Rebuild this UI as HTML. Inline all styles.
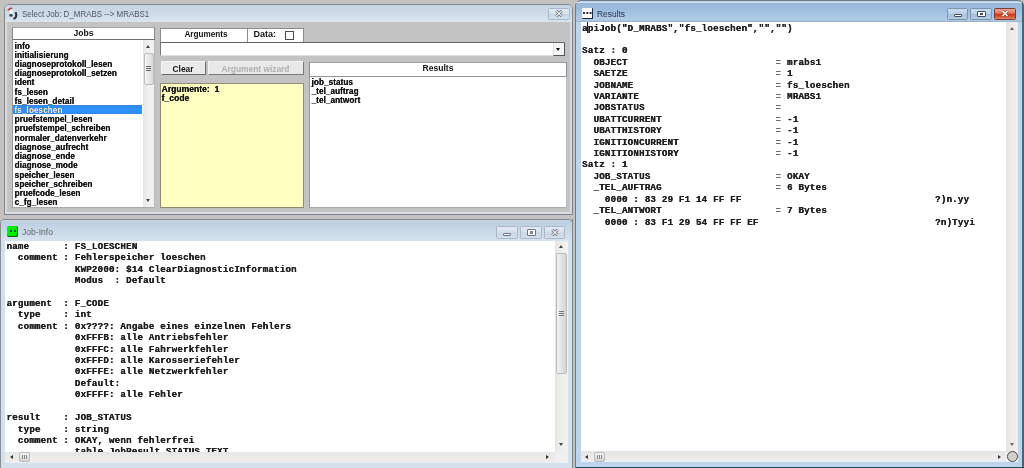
<!DOCTYPE html>
<html><head><meta charset="utf-8">
<style>
*{margin:0;padding:0;box-sizing:border-box}
html,body{width:1024px;height:468px;overflow:hidden;background:#c3c2c0;position:relative;font-family:"Liberation Sans",sans-serif}
#root{position:absolute;left:0;top:0;width:1024px;height:468px;will-change:transform}
.a{position:absolute}
.mono{font-family:"Liberation Mono",monospace;font-weight:bold;font-size:9.2px;letter-spacing:0.18px;line-height:11.4px;white-space:pre;color:#202020;text-shadow:0.3px 0 0 #202020}
.lst{font-weight:bold;font-size:8.2px;line-height:9.22px;white-space:pre;color:#141414;letter-spacing:0.05px;text-shadow:0.2px 0 0 #141414}
.hdr{background:#fff;font-weight:bold;font-size:8.6px;text-align:center;color:#141414;white-space:pre}
.eq{color:#6a6a6a;text-shadow:none}
.tb{border:1px solid #a8b8ca;border-radius:1.5px;background:linear-gradient(#e2eaf4,#d6e1ee 45%,#c8d6e6 55%,#d4e0ec)}
.tb2{border:1px solid #7c94ac;border-radius:1.5px;background:linear-gradient(#c8dbee,#bcd0e6 45%,#a8c0dc 55%,#b4cce4)}
.up{border-left:2.5px solid transparent;border-right:2.5px solid transparent;border-bottom:3px solid #444}
.dn{border-left:2.5px solid transparent;border-right:2.5px solid transparent;border-top:3px solid #444}
.lf{border-top:2.5px solid transparent;border-bottom:2.5px solid transparent;border-right:3px solid #333}
.rt{border-top:2.5px solid transparent;border-bottom:2.5px solid transparent;border-left:3px solid #333}
</style></head><body><div id="root">

<!-- ============ Window 1: Select Job ============ -->
<div class="a" style="left:4px;top:4px;width:569px;height:211px;background:#dadfe6;border:1px solid #7e858c;border-radius:5px 5px 0 0"></div>
<div class="a" style="left:5px;top:5px;width:567px;height:17px;background:linear-gradient(#c6d3e0,#d0dde9 60%,#dae5ee);border-radius:4px 4px 0 0"></div>
<svg class="a" style="left:6px;top:6px" width="14" height="14" viewBox="0 0 14 14">
<path d="M2 5 Q2.5 1.8 6.5 2" stroke="#e8c8d0" stroke-width="3.2" fill="none"/>
<path d="M2.3 4.6 Q2.8 2.3 6.3 2.4" stroke="#9a5060" stroke-width="1.8" fill="none"/>
<circle cx="5.2" cy="5.6" r="2" fill="#f6f2f4"/>
<ellipse cx="5" cy="9.4" rx="1.7" ry="1.3" fill="#34404c"/>
<path d="M9.6 6.2 Q10.8 9.2 9.8 11.2 Q9 12.6 7.4 12.3" stroke="#2a3440" stroke-width="2.2" fill="none"/>
</svg>
<div class="a" style="left:22.3px;top:8.6px;font-size:9px;line-height:11px;color:#4e5864;white-space:pre;transform:scaleX(0.885);transform-origin:0 0">Select Job: D_MRABS --&gt; MRABS1</div>
<div class="a tb" style="left:548px;top:8px;width:22px;height:12px"></div>
<svg class="a" style="left:554px;top:8.7px" width="10" height="9" viewBox="0 0 10 9"><path d="M2.3 1.8 L7.7 7.2 M7.7 1.8 L2.3 7.2" stroke="#6a7480" stroke-width="2.8"/><path d="M2.3 1.8 L7.7 7.2 M7.7 1.8 L2.3 7.2" stroke="#f4f6f8" stroke-width="1.2"/></svg>
<!-- body -->
<div class="a" style="left:5px;top:22px;width:566px;height:190px;background:#c3c3c3"></div>
<div class="a" style="left:5px;top:212px;width:567px;height:1.5px;background:#d9dde4"></div>
<div class="a" style="left:4px;top:214px;width:569px;height:1px;background:#7e8286"></div>
<div class="a" style="left:570px;top:22px;width:2px;height:192px;background:#d4d8de"></div>
<div class="a" style="left:5px;top:22px;width:1.6px;height:190px;background:#dcdcdc"></div>

<!-- Jobs header & list -->
<div class="a hdr" style="left:12px;top:27px;width:143px;height:13px;line-height:10px;border:1px solid #888;border-top:1.8px solid #a4a4a4;border-bottom:1.5px solid #707070">Jobs</div>
<div class="a" style="left:12px;top:40px;width:143px;height:168px;background:#fff;border-left:1px solid #999;border-right:1px solid #bbb;border-bottom:1px solid #aaa"></div>
<div class="a" style="left:13px;top:105px;width:129px;height:9px;background:linear-gradient(#3a82d8,#2f90f2 20%,#2f92f6 80%,#2a84e0)"></div>
<div class="a lst" style="left:14.6px;top:41.5px">info
initialisierung
diagnoseprotokoll_lesen
diagnoseprotokoll_setzen
ident
fs_lesen
fs_lesen_detail
<span style="color:#fff">fs_loeschen</span>
pruefstempel_lesen
pruefstempel_schreiben
normaler_datenverkehr
diagnose_aufrecht
diagnose_ende
diagnose_mode
speicher_lesen
speicher_schreiben
pruefcode_lesen
c_fg_lesen</div>
<!-- jobs scrollbar -->
<div class="a" style="left:143px;top:40px;width:11px;height:167px;background:linear-gradient(90deg,#e6e6e6,#f0f0ee 50%,#f2f2f4)"></div>
<div class="a" style="left:143.5px;top:53px;width:10px;height:32px;background:linear-gradient(90deg,#f4f4f4,#dadada);border:1px solid #bdbdbd;border-radius:2px"></div>
<div class="a" style="left:146px;top:66px;width:5px;height:1px;background:#666;box-shadow:0 2px 0 #666,0 4px 0 #666"></div>
<div class="a up" style="left:146px;top:45px"></div>
<div class="a dn" style="left:146px;top:199px"></div>

<!-- Arguments / Data -->
<div class="a hdr" style="left:160px;top:28px;width:88px;height:14.5px;line-height:12px;border:1px solid #8a8a8a;border-bottom:1.5px solid #666;font-size:8.2px;padding-left:4px">Arguments</div>
<div class="a hdr" style="left:246.5px;top:28px;width:57.5px;height:14.5px;line-height:12.5px;text-align:left;padding-left:6px;border:1px solid #8a8a8a;border-bottom:1.5px solid #666;font-size:9px;line-height:11.2px">Data:</div>
<div class="a" style="left:284.5px;top:30.5px;width:9.5px;height:9px;border:1.5px solid #4a4a4a;background:#fff"></div>
<!-- combo -->
<div class="a" style="left:160px;top:42px;width:405px;height:14px;background:#fff;border-top:1.5px solid #666;border-left:1.5px solid #777;border-right:1px solid #9a9a9a;border-bottom:1px solid #e0e0e0"></div>
<div class="a" style="left:552.5px;top:43px;width:12px;height:12.5px;background:#f4f4f4;border-right:1px solid #555;border-bottom:1px solid #555;border-left:1px solid #ddd"></div>
<div class="a" style="left:555.8px;top:47.5px;border-left:2.5px solid transparent;border-right:2.5px solid transparent;border-top:3.5px solid #111"></div>
<!-- buttons -->
<div class="a" style="left:160.5px;top:60.8px;width:45px;height:14.2px;background:#eaeaea;border-top:1px solid #f6f6f6;border-left:1px solid #f6f6f6;border-right:1.5px solid #6c6c6c;border-bottom:1.5px solid #6c6c6c"></div>
<div class="a" style="left:160.5px;top:63.5px;width:45px;text-align:center;font-weight:bold;font-size:8.4px;line-height:11px;color:#141414">Clear</div>
<div class="a" style="left:208px;top:60.8px;width:95.5px;height:14.2px;background:#e8e8e8;border-top:1px solid #f4f4f4;border-left:1px solid #f4f4f4;border-right:1.5px solid #7a7a7a;border-bottom:1.5px solid #7a7a7a"></div>
<div class="a" style="left:208px;top:63.5px;width:95px;text-align:center;font-weight:bold;font-size:8.4px;line-height:11px;color:#b0b0b0">Argument wizard</div>
<!-- yellow -->
<div class="a" style="left:160px;top:82.5px;width:144px;height:125px;background:#ffffc2;border:1px solid #8e8e78;border-bottom:1.5px solid #8a8a70"></div>
<div class="a lst" style="left:161.5px;top:84.8px;color:#141414;font-size:8.5px;line-height:9px">Argumente:  1
f_code</div>
<!-- Results list -->
<div class="a hdr" style="left:309px;top:62px;width:258px;height:14.5px;line-height:11px;border:1px solid #8c8c8c;border-top:1.8px solid #a0a0a0;border-bottom:1.6px solid #959595">Results</div>
<div class="a" style="left:309px;top:76.5px;width:258px;height:131.5px;background:#fff;border-left:1px solid #999;border-right:1px solid #bbb;border-bottom:1px solid #aaa"></div>
<div class="a lst" style="left:311.5px;top:79.2px;line-height:8.9px">job_status
_tel_auftrag
_tel_antwort</div>

<!-- ============ Window 2: Job-Info ============ -->
<div class="a" style="left:0px;top:219px;width:573px;height:249px;background:#d4e0ec;border:1px solid #80868c;border-left:1px solid #8a8e92;border-bottom:none;border-radius:5px 5px 0 0"></div>
<div class="a" style="left:1px;top:220px;width:571px;height:20.5px;background:linear-gradient(#c9d6e3,#bdd0e0 10%,#d6e3ef);border-radius:4px 4px 0 0"></div>
<div class="a" style="left:7px;top:226px;width:11px;height:11px;background:#00ec00;border-right:1.5px solid #0a5a0a;border-bottom:1.5px solid #0a5a0a;border-radius:2px"></div>
<div class="a" style="left:9.5px;top:230px;width:2px;height:2px;background:#0a6a3a;box-shadow:4px 0 0 #0a6a3a"></div>
<div class="a" style="left:21.5px;top:226.8px;font-size:9px;line-height:11px;color:#60676e;white-space:pre;transform:scaleX(0.95);transform-origin:0 0">Job-Info</div>
<div class="a tb" style="left:496px;top:226px;width:22px;height:13px"></div>
<div class="a" style="left:503px;top:232.5px;width:8px;height:3.5px;background:#fff;border:1px solid #6a7686;border-radius:1px"></div>
<div class="a tb" style="left:520px;top:226px;width:22px;height:13px"></div>
<div class="a" style="left:527px;top:229px;width:8.5px;height:6.5px;background:#fff;border:1px solid #6a7686;border-radius:1px"></div><div class="a" style="left:529.5px;top:231px;width:3.5px;height:2.5px;background:#7a8696"></div>
<div class="a tb" style="left:543.5px;top:226px;width:21.5px;height:13px"></div>
<svg class="a" style="left:549.5px;top:228px" width="10" height="9" viewBox="0 0 10 9"><path d="M2.3 1.8 L7.7 7.2 M7.7 1.8 L2.3 7.2" stroke="#6a7480" stroke-width="2.8"/><path d="M2.3 1.8 L7.7 7.2 M7.7 1.8 L2.3 7.2" stroke="#f4f6f8" stroke-width="1.2"/></svg>
<!-- text area -->
<div class="a" style="left:4.5px;top:240.5px;width:551px;height:211px;background:#fff"></div>
<div class="a mono" style="left:6.4px;top:241px">name      : FS_LOESCHEN
  comment : Fehlerspeicher loeschen
            KWP2000: $14 ClearDiagnosticInformation
            Modus  : Default

argument  : F_CODE
  type    : int
  comment : 0x????: Angabe eines einzelnen Fehlers
            0xFFFB: alle Antriebsfehler
            0xFFFC: alle Fahrwerkfehler
            0xFFFD: alle Karosseriefehler
            0xFFFE: alle Netzwerkfehler
            Default:
            0xFFFF: alle Fehler

result    : JOB_STATUS
  type    : string
  comment : OKAY, wenn fehlerfrei
            table JobResult STATUS_TEXT</div>
<!-- vscroll -->
<div class="a" style="left:555px;top:240.5px;width:12.5px;height:211px;background:linear-gradient(90deg,#e4e4e4,#f0efea 50%,#f2f2f6)"></div>
<div class="a" style="left:556px;top:253px;width:10.5px;height:121px;background:linear-gradient(90deg,#f2f2f2,#d4d4d4);border:1px solid #bcbcbc;border-radius:2px"></div>
<div class="a" style="left:558.5px;top:311px;width:5px;height:1px;background:#777;box-shadow:0 2px 0 #777,0 4px 0 #777"></div>
<div class="a up" style="left:558.5px;top:244.5px"></div>
<div class="a dn" style="left:558.5px;top:442.5px"></div>
<!-- hscroll -->
<div class="a" style="left:4.5px;top:451.5px;width:551px;height:11px;background:linear-gradient(#e4e6e8,#eeebe6 50%,#eceef4)"></div>
<div class="a" style="left:18.5px;top:452px;width:11px;height:10px;background:linear-gradient(#f2f2f2,#d4d4d4);border:1px solid #bcbcbc;border-radius:2px"></div>
<div class="a" style="left:22px;top:455px;width:1px;height:4px;background:#8a8a8a;box-shadow:2px 0 0 #8a8a8a,4px 0 0 #8a8a8a"></div>
<div class="a lf" style="left:10px;top:454.5px"></div>
<div class="a rt" style="left:546px;top:454.5px"></div>
<div class="a" style="left:555px;top:451.5px;width:12.5px;height:11px;background:#f0f0f0"></div>
<div class="a" style="left:567.5px;top:240px;width:4px;height:228px;background:#d4e0ec"></div>
<div class="a" style="left:572px;top:219px;width:1px;height:249px;background:#80868c"></div>

<!-- ============ Window 3: Results ============ -->
<div class="a" style="left:574.5px;top:0px;width:449.5px;height:468px;background:#bcd4ec;border:1px solid #707a84;border-right:2px solid #3e6a78;border-radius:6px 6px 0 0"></div>
<div class="a" style="left:575.5px;top:1.5px;width:446px;height:1px;background:#cfdeec"></div>
<div class="a" style="left:575.5px;top:2.5px;width:446px;height:19px;background:linear-gradient(#96b6d8,#a2c0e0 50%,#b2cbe6 85%,#a8bed4);border-radius:4px 4px 0 0"></div>
<div class="a" style="left:576px;top:20.5px;width:446px;height:1px;background:#9ab6d2"></div>
<div class="a" style="left:582px;top:8px;width:11px;height:10.5px;background:#fafafa;border-right:1.5px solid #1e2a36;border-bottom:1.5px solid #1e2a36;border-radius:1px"></div>
<div class="a" style="left:583px;top:12px;width:1.5px;height:1.5px;background:#334;box-shadow:3.3px 0 0 #334,6.6px 0 0 #334"></div>
<div class="a" style="left:597px;top:8.6px;font-size:8.4px;color:#1e3250;white-space:pre">Results</div>
<div class="a tb2" style="left:946.5px;top:8px;width:21.5px;height:11.5px"></div>
<div class="a" style="left:953.5px;top:13.5px;width:8px;height:3px;background:#fff;border:1px solid #3e4c5c;border-radius:1px"></div>
<div class="a tb2" style="left:970px;top:8px;width:22px;height:11.5px"></div>
<div class="a" style="left:977px;top:11px;width:8.5px;height:5.5px;background:#fff;border:1.5px solid #3e4c5c;border-radius:1px"></div>
<div class="a" style="left:980px;top:13px;width:3px;height:2px;background:#3e4c5c"></div>
<div class="a" style="left:994px;top:8px;width:22px;height:11.5px;background:linear-gradient(#eaa494,#dc7a64 40%,#cc3c1c 55%,#d85a3c 80%,#e88a70);border:1px solid #7a3a36;border-radius:1.5px"></div>
<svg class="a" style="left:1000px;top:9.2px" width="10" height="9" viewBox="0 0 10 9"><path d="M2.5 2 L7.5 7 M7.5 2 L2.5 7" stroke="#8a3a30" stroke-width="2.8"/><path d="M2.5 2 L7.5 7 M7.5 2 L2.5 7" stroke="#fff" stroke-width="1.5"/></svg>
<!-- text area -->
<div class="a" style="left:581px;top:21.5px;width:425px;height:430px;background:#fff"></div>
<div class="a mono" style="left:582px;top:22.6px">apiJob("D_MRABS","fs_loeschen","","")

Satz : 0
  OBJECT                          <span class="eq">=</span> mrabs1
  SAETZE                          <span class="eq">=</span> 1
  JOBNAME                         <span class="eq">=</span> fs_loeschen
  VARIANTE                        <span class="eq">=</span> MRABS1
  JOBSTATUS                       <span class="eq">=</span>
  UBATTCURRENT                    <span class="eq">=</span> -1
  UBATTHISTORY                    <span class="eq">=</span> -1
  IGNITIONCURRENT                 <span class="eq">=</span> -1
  IGNITIONHISTORY                 <span class="eq">=</span> -1
Satz : 1
  JOB_STATUS                      <span class="eq">=</span> OKAY
  _TEL_AUFTRAG                    <span class="eq">=</span> 6 Bytes
    0000 : 83 29 F1 14 FF FF                                  ?)n.yy
  _TEL_ANTWORT                    <span class="eq">=</span> 7 Bytes
    0000 : 83 F1 29 54 FF FF EF                               ?n)Tyyi</div>
<div class="a" style="left:587px;top:22px;width:1px;height:11px;background:#222"></div>
<!-- vscroll -->
<div class="a" style="left:1006px;top:21.5px;width:12px;height:430px;background:linear-gradient(90deg,#e4e4e4,#f0eee8 50%,#eeeef4)"></div>
<div class="a up" style="left:1009.5px;top:26.5px;border-bottom-color:#666"></div>
<div class="a dn" style="left:1009.5px;top:442.5px;border-top-color:#666"></div>
<!-- hscroll -->
<div class="a" style="left:581px;top:451px;width:425px;height:11px;background:linear-gradient(#e2e4e8,#eeeae4 50%,#eaeef4)"></div>
<div class="a" style="left:594px;top:452px;width:10.5px;height:9.5px;background:linear-gradient(#f2f2f2,#d4d4d4);border:1px solid #bcbcbc;border-radius:2px"></div>
<div class="a" style="left:597px;top:455px;width:1px;height:4px;background:#8a8a8a;box-shadow:2px 0 0 #8a8a8a,4px 0 0 #8a8a8a"></div>
<div class="a lf" style="left:585px;top:454.5px"></div>
<div class="a rt" style="left:998px;top:454.5px"></div>
<div class="a" style="left:1006px;top:451.5px;width:12px;height:10.5px;background:#f0f0f0"></div>
<div class="a" style="left:1006.8px;top:451px;width:10.8px;height:10.8px;border-radius:50%;background:#d2d0cc;border:1.5px solid #4a4a4a"></div>
<div class="a" style="left:575.5px;top:466.5px;width:448.5px;height:0.7px;background:#90d0e0"></div><div class="a" style="left:575.5px;top:467px;width:448.5px;height:1px;background:#1e4c58"></div>
</div></body></html>
